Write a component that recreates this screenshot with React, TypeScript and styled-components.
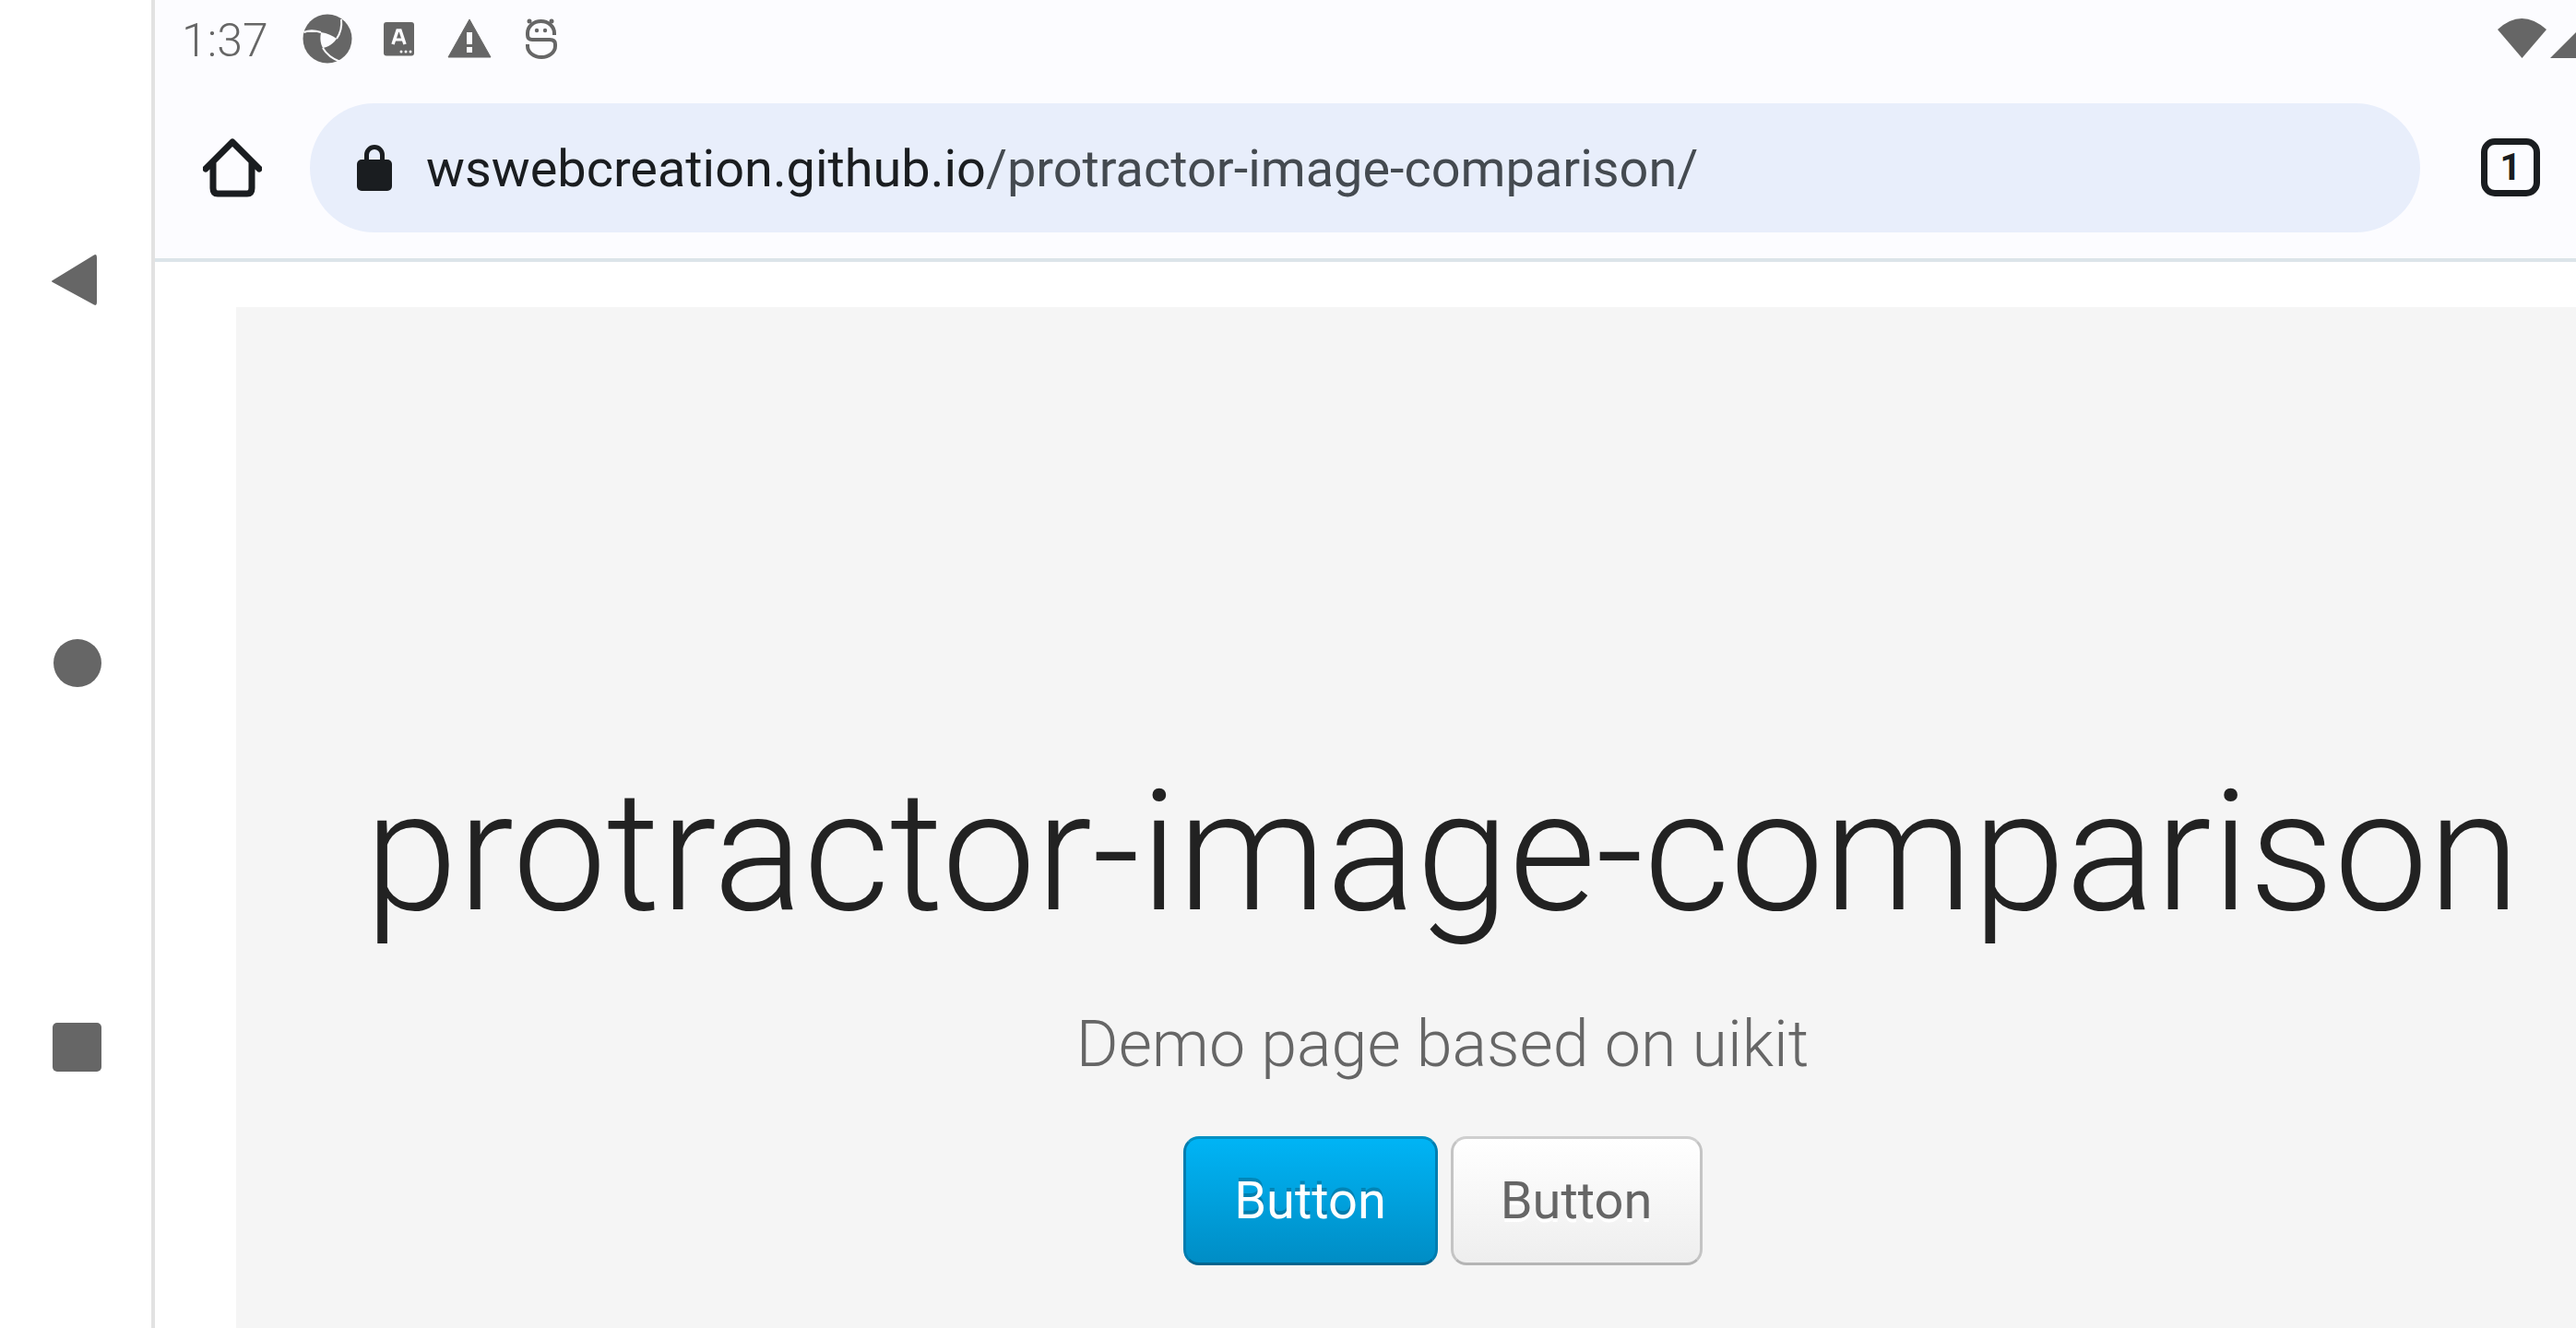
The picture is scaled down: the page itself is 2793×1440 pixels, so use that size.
import React from "react";
import styled, { createGlobalStyle } from "styled-components";

const Global = createGlobalStyle`
  html, body { margin: 0; padding: 0; background: #fff; overflow: hidden; }
  #root { width: 2793px; height: 1440px; }
  * { box-sizing: border-box; }
`;

const Screen = styled.div`
  display: flex;
  width: 2793px;
  height: 1440px;
  overflow: hidden;
  font-family: Roboto, "Noto Sans", sans-serif;
  background: #fff;
`;

const NavRail = styled.nav`
  flex: 0 0 168px;
  border-right: 4px solid #e2e2e2;
  background: #fff;
  display: flex;
  flex-direction: column;
  align-items: flex-start;
  padding: 275px 0 0 56px;
  gap: 360px;
`;

const NavGlyph = styled.svg`
  display: block;
  width: 54px;
  height: 57px;
`;

const Main = styled.div`
  flex: 1;
  min-width: 0;
  display: flex;
  flex-direction: column;
`;

const StatusBar = styled.div`
  height: 90px;
  background: #fcfcff;
  display: flex;
  align-items: flex-start;
  position: relative;
`;

const Time = styled.span`
  font-size: 50px;
  line-height: 50px;
  color: #666;
  font-weight: 300;
  margin: 19px 0 0 29px;
  width: 130px;
`;

const StatusGlyph = styled.svg`
  display: block;
  position: absolute;
  left: 0;
  top: 0;
`;

const Toolbar = styled.div`
  height: 194px;
  background: #fcfcff;
  border-bottom: 4px solid #dce4e9;
  display: flex;
  align-items: flex-start;
  padding: 22px 0 0 52px;
`;

const HomeIcon = styled.svg`
  display: block;
  width: 64px;
  height: 64px;
  margin: 38px 52px 0 0;
`;

const UrlPill = styled.div`
  width: 2288px;
  height: 140px;
  border-radius: 70px;
  background: #e8eefb;
  display: flex;
  align-items: center;
  padding-left: 51px;
`;

const LockIcon = styled.svg`
  display: block;
  width: 38px;
  height: 50px;
  margin: -1px 38px 0 0;
`;

const Url = styled.div`
  font-size: 55.85px;
  line-height: 1;
  color: #1a1d20;
  white-space: nowrap;
  margin-top: 4px;
  margin-left: -1px;
`;

const UrlPath = styled.span`
  color: #444a50;
`;

const TabCount = styled.div`
  width: 64px;
  height: 63px;
  margin: 38px 0 0 66px;
  border: 7px solid #1a1d20;
  border-radius: 15px;
  color: #1a1d20;
  font-size: 40px;
  font-weight: 700;
  display: flex;
  align-items: center;
  justify-content: center;
`;

const Page = styled.div`
  flex: 1;
  min-height: 0;
  padding: 49px 0 0 88px;
  background: #fff;
`;

const Hero = styled.section`
  width: 2616px;
  height: 1200px;
  background: #f5f5f5;
  display: flex;
  flex-direction: column;
  align-items: center;
  padding-top: 491px;
`;

const Title = styled.h1`
  margin: 0;
  font-size: 181.6px;
  line-height: 200px;
  font-weight: 300;
  color: #222;
  white-space: nowrap;
`;

const Subtitle = styled.p`
  margin: 68px 0 0;
  font-size: 70px;
  line-height: 80px;
  font-weight: 300;
  color: #666;
`;

const Actions = styled.div`
  display: flex;
  gap: 14px;
  margin-top: 60px;
`;

const Button = styled.button<{ $primary?: boolean }>`
  width: ${(p) => (p.$primary ? "276px" : "273px")};
  height: 140px;
  border-radius: 17px;
  border-width: 3px;
  border-style: solid;
  font-family: Roboto, sans-serif;
  font-size: 56px;
  padding: 0;
  color: ${(p) => (p.$primary ? "#fff" : "#666")};
  border-color: ${(p) =>
    p.$primary
      ? "#0090c2 #007db0 #00648e"
      : "#cfcfcf #c4c4c4 #b4b4b4"};
  background: ${(p) =>
    p.$primary
      ? "linear-gradient(to bottom, #00b4f5, #008dc5)"
      : "linear-gradient(to bottom, #fff, #eee)"};
  text-shadow: ${(p) =>
    p.$primary ? "0 -4px 0 rgba(0,0,0,.2)" : "0 4px 0 #fff"};
`;

const BAR = "#fcfcff";

export default function App() {
  return (
    <Screen>
      <Global />
      <NavRail>
        <NavGlyph viewBox="0 0 54 57">
          <path d="M1 29 L46 1.5 Q49 0 49 4 V53 Q49 57 46 55.5 L1 31 Q-1 30 1 29 Z" fill="#666" />
        </NavGlyph>
        <NavGlyph viewBox="0 0 54 57">
          <circle cx="28" cy="27" r="26" fill="#666" />
        </NavGlyph>
        <NavGlyph viewBox="0 0 54 57">
          <rect x="1" y="0" width="53" height="53" rx="5" fill="#666" />
        </NavGlyph>
      </NavRail>
      <Main>
        <StatusBar>
          <Time>1:37</Time>
          <StatusGlyph width="460" height="90" viewBox="168 0 460 90">
            <circle cx="355" cy="42" r="26.500" fill="#666" />
            <path d="M329 35 C336 32 342 33 348 35 C355 36 361 39 365 42 C362 47 356 51 350 52 C347 46 347 41 348 35 Z" fill={BAR} />
            <path d="M329.500 35 C336 32 342 33 348 35 M370 21 C371 29 369 36 365 42 M350 52 C354 59 361 64 369 67" fill="none" stroke={BAR} strokeWidth="2" />
            <rect x="416" y="24" width="33" height="36.500" rx="3" fill="#666" />
            <path d="M426 48 L431 33 H434 L439 48" fill="none" stroke={BAR} strokeWidth="3.500" />
            <path d="M428 43 H437" stroke={BAR} strokeWidth="3" />
            <circle cx="435" cy="56" r="1.500" fill={BAR} /><circle cx="440" cy="56" r="1.500" fill={BAR} /><circle cx="445" cy="56" r="1.500" fill={BAR} />
            <path d="M509 21 L532 62 H486 Z" fill="#666" stroke="#666" strokeWidth="1" strokeLinejoin="round" />
            <rect x="506" y="35" width="6" height="13" fill={BAR} />
            <rect x="506" y="51" width="6" height="6" fill={BAR} />
            <path d="M601 38 V36 A14.500 13 0 0 0 572 36 V38 Q572 43 577 43 H596 Q602 43 602 48 V50 A15 12 0 0 1 572 50 V48" fill="none" stroke="#666" strokeWidth="4" />
            <circle cx="582" cy="33" r="2.200" fill="#666" /><circle cx="591" cy="33" r="2.200" fill="#666" />
            <circle cx="574" cy="23" r="2.500" fill="#666" /><circle cx="598" cy="23" r="2.500" fill="#666" />
          </StatusGlyph>
          <StatusGlyph width="625" height="90" viewBox="2168 0 625 90" style={{ left: 2000 }}>
            <path d="M2708 32 Q2734 8 2761 32 L2734.500 63 Z" fill="#666" />
            <path d="M2765 63 L2793 35 V63 Z" fill="#666" />
          </StatusGlyph>
        </StatusBar>
        <Toolbar>
          <HomeIcon viewBox="0 0 64 64">
            <path d="M3 33 L32 4 L61 33 M11 26 V54 Q11 60 16 60 H48 Q53 60 53 54 V26" fill="none" stroke="#1a1d20" strokeWidth="7" strokeLinejoin="round" strokeLinecap="round" />
          </HomeIcon>
          <UrlPill>
            <LockIcon viewBox="0 0 38 50">
              <path d="M10.500 18 V11 A8.500 8.500 0 0 1 27.500 11 V18" fill="none" stroke="#1a1d20" strokeWidth="5" />
              <rect x="0" y="16" width="38" height="34" rx="5" fill="#1a1d20" />
            </LockIcon>
            <Url>
              wswebcreation.github.io<UrlPath>/protractor-image-comparison/</UrlPath>
            </Url>
          </UrlPill>
          <TabCount>1</TabCount>
        </Toolbar>
        <Page>
          <Hero>
            <Title>protractor-image-comparison</Title>
            <Subtitle>Demo page based on uikit</Subtitle>
            <Actions>
              <Button $primary>Button</Button>
              <Button>Button</Button>
            </Actions>
          </Hero>
        </Page>
      </Main>
    </Screen>
  );
}
